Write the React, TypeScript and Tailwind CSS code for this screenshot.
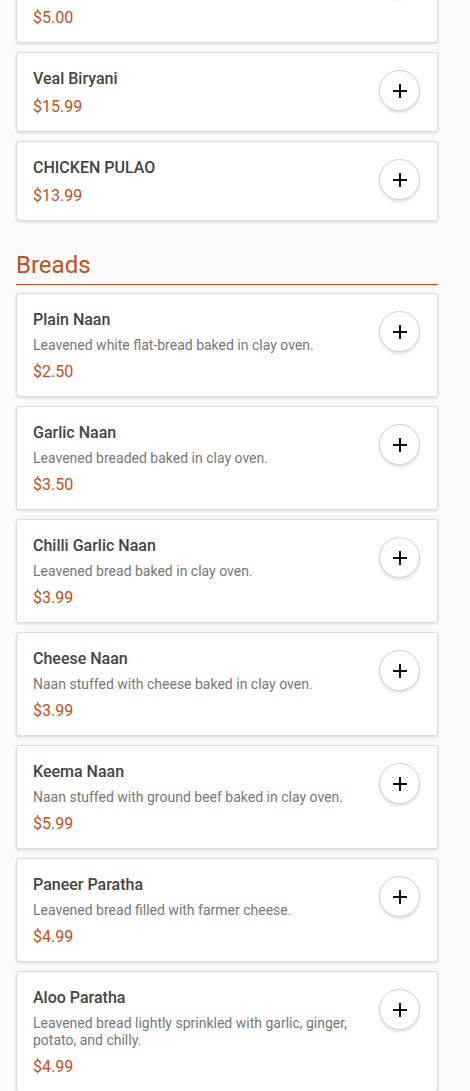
import React from 'react';

type Item = {
    name: string;
    desc?: string;
    price: string;
};

const topItems: Item[] = [
    { name: 'Vegetable Biryani', desc: 'Basmati rice cooked with mixed vegetables.', price: '$5.00' },
    { name: 'Veal Biryani', price: '$15.99' },
    { name: 'CHICKEN PULAO', price: '$13.99' },
];

const breads: Item[] = [
    { name: 'Plain Naan', desc: 'Leavened white flat-bread baked in clay oven.', price: '$2.50' },
    { name: 'Garlic Naan', desc: 'Leavened breaded baked in clay oven.', price: '$3.50' },
    { name: 'Chilli Garlic Naan', desc: 'Leavened bread baked in clay oven.', price: '$3.99' },
    { name: 'Cheese Naan', desc: 'Naan stuffed with cheese baked in clay oven.', price: '$3.99' },
    { name: 'Keema Naan', desc: 'Naan stuffed with ground beef baked in clay oven.', price: '$5.99' },
    { name: 'Paneer Paratha', desc: 'Leavened bread filled with farmer cheese.', price: '$4.99' },
    {
        name: 'Aloo Paratha',
        desc: 'Leavened bread lightly sprinkled with garlic, ginger, potato, and chilly.',
        price: '$4.99',
    },
];

function MenuCard({ item }: { item: Item }) {
    return (
        <div className="mb-[9px] flex rounded-[3px] border border-[#dcdcdc] bg-white pl-4 pr-[17px] pt-4 pb-[14px] shadow-[0_1px_3px_rgba(0,0,0,0.14)]">
            <div className="min-w-0 flex-1 pr-4">
                <div className="text-[16px] font-medium leading-5 text-[#444]">{item.name}</div>
                {item.desc && (
                    <div className="mt-[7px] text-[14px] leading-[17px] text-[#777]">{item.desc}</div>
                )}
                <div className="mt-[8px] text-[16px] leading-5 text-[#c0501a]">{item.price}</div>
            </div>
            <button className="mt-[1px] flex h-[41px] w-[41px] shrink-0 items-center justify-center rounded-full border border-[#d0d0d0] bg-white shadow-[0_2px_3px_rgba(0,0,0,0.12)]">
                <svg width="16" height="16" viewBox="0 0 16 16" fill="none">
                    <path d="M8 1v14M1 8h14" stroke="#111" strokeWidth="2" />
                </svg>
            </button>
        </div>
    );
}

export default function App() {
    return (
        <div
            className="min-h-screen overflow-hidden bg-[#fafafa]"
            style={{ fontFamily: 'Roboto, "Noto Sans", sans-serif' }}
        >
            <div className="-mt-[61px] ml-4 w-[422px]">
                {topItems.map((item, i) => (
                    <MenuCard key={i} item={item} />
                ))}
                <h2 className="mt-[29px] mb-[8px] border-b border-[#c0501a] pb-[4px] text-[24px] leading-[30px] text-[#c0501a]">
                    Breads
                </h2>
                {breads.map((item, i) => (
                    <MenuCard key={i} item={item} />
                ))}
            </div>
        </div>
    );
}
